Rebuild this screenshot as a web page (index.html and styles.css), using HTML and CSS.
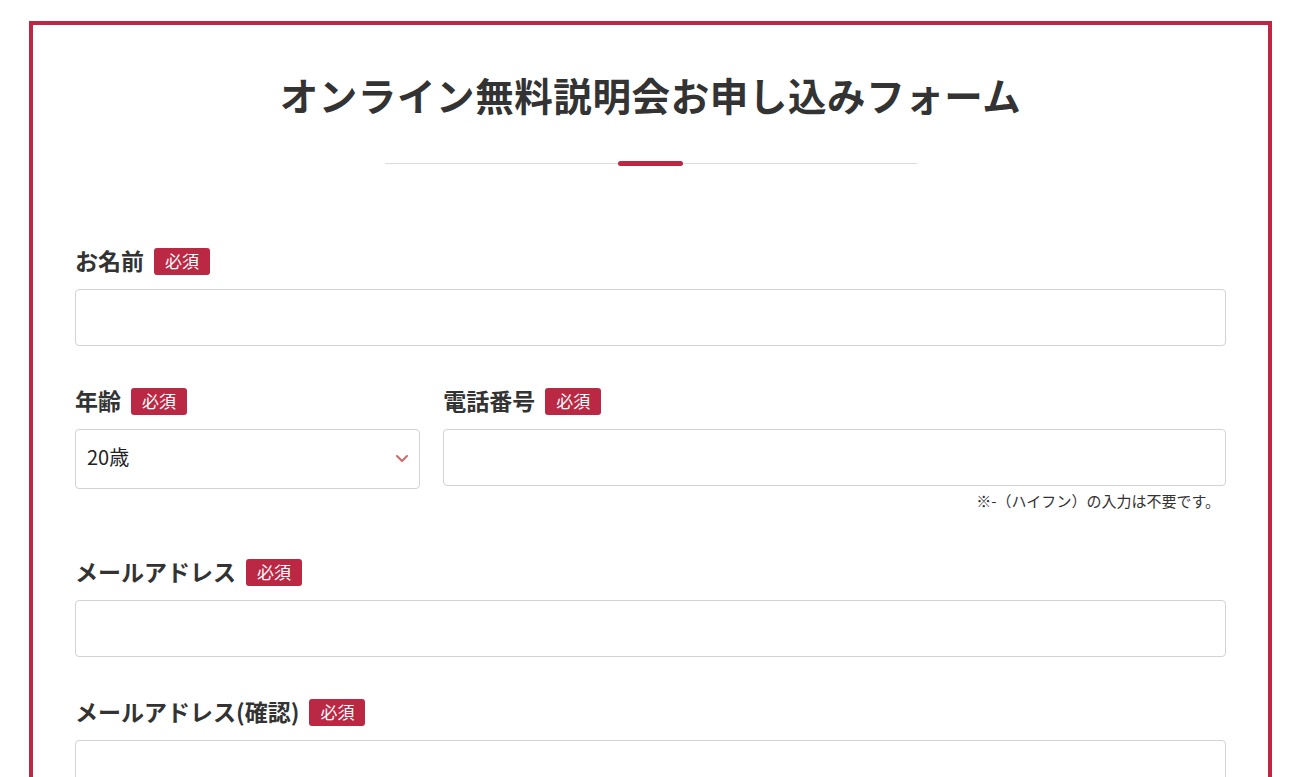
FILE: index.html
```html
<!DOCTYPE html>
<html lang="ja">
<head>
<meta charset="utf-8">
<title>オンライン無料説明会お申し込みフォーム</title>
<link rel="stylesheet" href="styles.css">
</head>
<body>
<div class="frame">
  <h1 class="title">オンライン無料説明会お申し込みフォーム</h1>
  <div class="divider"><span class="divider-bar"></span></div>

  <form class="form">
    <div class="field">
      <div class="label-row"><label class="label">お名前</label><span class="badge">必須</span></div>
      <input class="input" type="text">
    </div>

    <div class="row">
      <div class="field col-age">
        <div class="label-row"><label class="label">年齢</label><span class="badge">必須</span></div>
        <div class="select-wrap">
          <select class="select">
            <option>20歳</option>
          </select>
          <svg class="chevron" width="14" height="9" viewBox="0 0 14 9"><path d="M2 2 L7 7 L12 2" fill="none" stroke="#d06a6a" stroke-width="2" stroke-linecap="round" stroke-linejoin="round"/></svg>
        </div>
      </div>
      <div class="field col-tel">
        <div class="label-row"><label class="label">電話番号</label><span class="badge">必須</span></div>
        <input class="input" type="tel">
        <p class="note">※-（ハイフン）の入力は不要です。</p>
      </div>
    </div>

    <div class="field">
      <div class="label-row"><label class="label">メールアドレス</label><span class="badge">必須</span></div>
      <input class="input" type="email">
    </div>

    <div class="field">
      <div class="label-row"><label class="label">メールアドレス(確認)</label><span class="badge">必須</span></div>
      <input class="input" type="email">
    </div>
  </form>
</div>
</body>
</html>
```

FILE: styles.css
```css
* { box-sizing: border-box; }

html, body {
  margin: 0;
  padding: 0;
  background: #fff;
}

body {
  font-family: "Noto Sans CJK JP", "Noto Sans", sans-serif;
  color: #333;
  padding: 21px 28px 0 29px;
}

.frame {
  border: 4px solid #bb2843;
  border-bottom: none;
  padding: 41px 42px 0 42px;
  min-height: 800px;
}

.title {
  margin: 0;
  text-align: center;
  font-size: 38.5px;
  line-height: 56px;
  font-weight: 700;
  color: #333;
  letter-spacing: 0.6px;
}

.divider {
  width: 532px;
  height: 5px;
  margin: 39px auto 0;
  display: flex;
  justify-content: center;
  background: linear-gradient(#dcdcdc, #dcdcdc) center / 100% 1px no-repeat;
}

.divider-bar {
  width: 65px;
  height: 5px;
  border-radius: 3px;
  background: #bb2843;
}

.form {
  margin-top: 82px;
}

.field {
  margin-bottom: 42px;
}

.label-row {
  display: flex;
  align-items: center;
  height: 27px;
  margin-bottom: 14px;
}

.label {
  font-size: 23px;
  font-weight: 700;
  line-height: 27px;
  color: #333;
  margin: -3px 10px 0 0;
}

.badge {
  display: inline-flex;
  align-items: center;
  justify-content: center;
  height: 27px;
  padding: 0 11px 2px;
  background: #bb2843;
  color: #fff;
  font-size: 17px;
  border-radius: 3px;
}

.input {
  display: block;
  width: 100%;
  height: 57px;
  border: 1px solid #d3d3d3;
  border-radius: 4px;
  background: #fff;
  font-family: inherit;
  font-size: 18px;
  padding: 0 11px;
}

.row {
  display: flex;
  gap: 23px;
  margin-bottom: 48px;
}

.row .field {
  margin-bottom: 0;
}

.col-age {
  width: 30%;
  flex: none;
}

.col-tel {
  flex: 1;
}

.select-wrap {
  position: relative;
}

.select {
  display: block;
  width: 100%;
  height: 60px;
  border: 1px solid #d3d3d3;
  border-radius: 4px;
  background: #fff;
  -webkit-appearance: none;
  appearance: none;
  font-family: "Noto Sans CJK JP", sans-serif;
  font-size: 20px;
  color: #222;
  padding: 0 11px 5px;
}

.chevron {
  position: absolute;
  right: 11px;
  top: 25px;
  pointer-events: none;
}

.note {
  margin: 5px 6px 0 0;
  text-align: right;
  font-size: 15px;
  line-height: 20px;
  color: #333;
}
```
